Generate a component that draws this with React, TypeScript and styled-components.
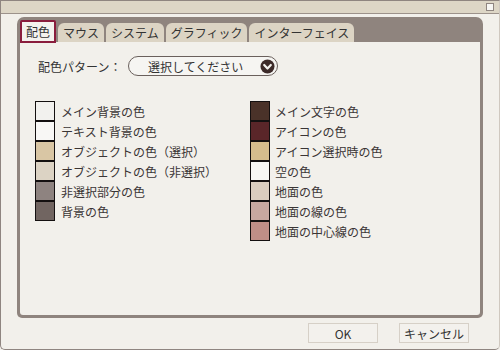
import React from "react";
import styled, { createGlobalStyle } from "styled-components";

const Global = createGlobalStyle`
  html, body { margin: 0; padding: 0; background: #f2f0eb; }
  * { box-sizing: border-box; }
  body { font-family: "Noto Sans CJK JP", "Noto Sans", sans-serif; }
`;

const Window = styled.div`
  width: 500px;
  height: 350px;
  border: 1px solid #8f8580;
  border-right-color: #cfc8bf;
  border-radius: 0 0 5px 5px;
  background: #f2f0eb;
  display: flex;
  flex-direction: column;
  overflow: hidden;
`;

const TitleBar = styled.div`
  height: 13px;
  background: #ddd6c6;
  border-bottom: 1px solid #9c928b;
  display: flex;
  align-items: center;
  justify-content: flex-end;
  padding-right: 5px;
`;

const CloseBox = styled.div`
  width: 8px;
  height: 8px;
  background: #f7f6f3;
  border: 1px solid #8f8580;
`;

const Body = styled.div`
  flex: 1;
  display: flex;
  flex-direction: column;
  padding: 3px 16px 0 16px;
`;

const Panel = styled.div`
  height: 301px;
  background: #8f847e;
  border-radius: 7px 7px 5px 5px;
  padding: 3px 3px 3px 3px;
  display: flex;
  flex-direction: column;
`;

const TabStrip = styled.div`
  height: 22px;
  display: flex;
  align-items: flex-end;
  gap: 2px;
`;

const Tab = styled.div<{ $active?: boolean }>`
  height: ${(p) => (p.$active ? "23px" : "19px")};
  padding: 0 ${(p) => (p.$active ? "4px" : "5px")};
  background: ${(p) => (p.$active ? "#f4f2ee" : "#dcd4c4")};
  border: ${(p) => (p.$active ? "2px solid #8a1d3d" : "none")};
  border-radius: ${(p) => (p.$active ? "2px 2px 0 0" : "6px 6px 0 0")};
  margin-bottom: ${(p) => (p.$active ? "-1px" : "0")};
  position: relative;
  z-index: ${(p) => (p.$active ? 1 : 0)};
  font-size: 12px;
  line-height: ${(p) => (p.$active ? "19px" : "19px")};
  color: #333;
  white-space: nowrap;
`;

const Content = styled.div`
  flex: 1;
  background: #f2f0eb;
  border-radius: 0 0 3px 3px;
  padding: 14px 0 0 15px;
  display: flex;
  flex-direction: column;
`;

const PatternRow = styled.div`
  display: flex;
  align-items: center;
  margin-left: 3px;
  height: 20px;
`;

const Label = styled.span`
  font-size: 12px;
  color: #333;
  width: 90px;
  white-space: nowrap;
`;

const Select = styled.div`
  width: 150px;
  height: 20px;
  border: 1px solid #6a605c;
  border-radius: 10px;
  background: #f6f5f2;
  display: flex;
  align-items: center;
  padding: 0 2px 0 19px;
  font-size: 12px;
  color: #333;
`;

const SelectText = styled.span`
  flex: 1;
  white-space: nowrap;
`;

const Grid = styled.div`
  display: flex;
  margin-top: 25px;
`;

const Column = styled.div<{ $width?: number }>`
  display: flex;
  flex-direction: column;
  width: ${(p) => (p.$width ? `${p.$width}px` : "auto")};
`;

const ColorRow = styled.div<{ $gap: number }>`
  display: flex;
  align-items: center;
  gap: ${(p) => p.$gap}px;
  height: 20px;
`;

const Swatch = styled.div<{ $color: string }>`
  width: 20px;
  height: 20px;
  border: 1px solid #141010;
  background: ${(p) => p.$color};
`;

const ColorLabel = styled.span`
  font-size: 12px;
  color: #3a3535;
  white-space: nowrap;
`;

const Footer = styled.div`
  display: flex;
  justify-content: flex-end;
  gap: 21px;
  padding: 5px 14px 0 0;
`;

const Button = styled.div`
  width: 70px;
  height: 20px;
  border: 1px solid #d6d0c7;
  background: #f3f1ed;
  font-size: 12px;
  color: #333;
  display: flex;
  align-items: center;
  justify-content: center;
  font-family: "Noto Sans CJK JP", "Noto Sans", sans-serif;
`;

const DropIcon = () => (
  <svg width="15" height="15" viewBox="0 0 15 15">
    <circle cx="7.5" cy="7.5" r="7" fill="#3d2b29" />
    <path d="M4.2 6 L7.5 9.5 L10.8 6" fill="none" stroke="#f4f2ee" strokeWidth="2.2" strokeLinecap="round" strokeLinejoin="round" />
  </svg>
);

const left = [
  ["#f2f1ee", "メイン背景の色"],
  ["#f8f7f5", "テキスト背景の色"],
  ["#d9c6a4", "オブジェクトの色（選択）"],
  ["#dcd3c4", "オブジェクトの色（非選択）"],
  ["#8e8380", "非選択部分の色"],
  ["#716561", "背景の色"],
];

const right = [
  ["#4a3229", "メイン文字の色"],
  ["#5a2629", "アイコンの色"],
  ["#d5bd8d", "アイコン選択時の色"],
  ["#f7f6f3", "空の色"],
  ["#dbcdbf", "地面の色"],
  ["#c8a8a0", "地面の線の色"],
  ["#bf8e87", "地面の中心線の色"],
];

const tabs = ["配色", "マウス", "システム", "グラフィック", "インターフェイス"];

export default function App() {
  return (
    <>
      <Global />
      <Window>
        <TitleBar>
          <CloseBox />
        </TitleBar>
        <Body>
          <Panel>
            <TabStrip>
              {tabs.map((t, i) => (
                <Tab key={t} $active={i === 0}>
                  {t}
                </Tab>
              ))}
            </TabStrip>
            <Content>
              <PatternRow>
                <Label>配色パターン：</Label>
                <Select>
                  <SelectText>選択してください</SelectText>
                  <DropIcon />
                </Select>
              </PatternRow>
              <Grid>
                <Column $width={215}>
                  {left.map(([c, l]) => (
                    <ColorRow key={l} $gap={6}>
                      <Swatch $color={c} />
                      <ColorLabel>{l}</ColorLabel>
                    </ColorRow>
                  ))}
                </Column>
                <Column>
                  {right.map(([c, l]) => (
                    <ColorRow key={l} $gap={5}>
                      <Swatch $color={c} />
                      <ColorLabel>{l}</ColorLabel>
                    </ColorRow>
                  ))}
                </Column>
              </Grid>
            </Content>
          </Panel>
          <Footer>
            <Button>OK</Button>
            <Button>キャンセル</Button>
          </Footer>
        </Body>
      </Window>
    </>
  );
}
